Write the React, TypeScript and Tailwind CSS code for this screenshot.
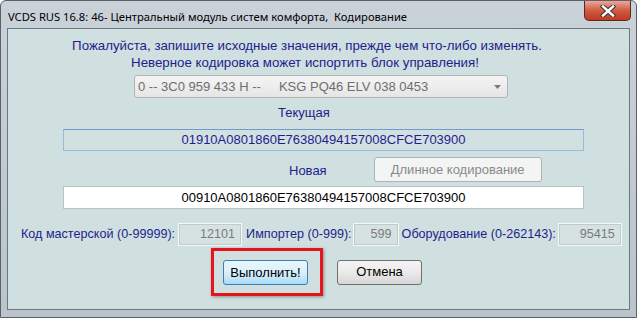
import React from 'react';

const navy = 'text-[#1e1e8c]';

const NumField = ({ value, w }: { value: string; w: string }) => (
  <div
    className={`${w} h-[23px] flex items-center justify-end pr-[6px] border border-[#f6f8f8] outline outline-1 outline-[#bfcccc] -outline-offset-2 bg-[#d6e2e2] text-[#7a7a7a]`}
  >
    {value}
  </div>
);

export default function App() {
  return (
    <div className="w-[637px] h-[318px] flex flex-col bg-gradient-to-b from-[#c9d2d8] to-[#b9c4cb] border border-[#5a6066] rounded-t-[6px] overflow-hidden font-['Liberation_Sans',Arial,sans-serif] text-[13px] whitespace-nowrap">
      {/* title bar */}
      <div className="h-[27px] flex items-start shrink-0">
        <div className="pt-[8px] pl-[7px] text-[11.2px] text-black font-['Noto_Sans','DejaVu_Sans',sans-serif] leading-[16px]">
          VCDS RUS 16.8: 46- Центральный модуль систем комфорта,&nbsp; Кодирование
        </div>
        <div className="ml-auto mr-[5px] w-[47px] h-[20px] rounded-b-[5px] border border-t-0 border-[#5b2a22] bg-gradient-to-b from-[#e9a898] via-[#cf5a43] to-[#c0391f] flex items-center justify-center">
          <svg width="16" height="12" viewBox="0 0 16 12">
            <path d="M3 1.5 L13 10.5 M13 1.5 L3 10.5" stroke="#3a3a3a" strokeWidth="4.5" strokeLinecap="square" />
            <path d="M3 1.5 L13 10.5 M13 1.5 L3 10.5" stroke="#ffffff" strokeWidth="2.4" strokeLinecap="square" />
          </svg>
        </div>
      </div>

      {/* client area */}
      <div className="flex-1 mx-[6px] mb-[7px] border border-[#6f777c] bg-[#d0dfdf] flex flex-col">
        <div className={`mt-[9px] text-center ${navy} leading-[16px] pr-[23px] text-[13.3px]`}>
          Пожалуйста, запишите исходные значения, прежде чем что-либо изменять.
        </div>
        <div className={`mt-[1px] text-center ${navy} leading-[16px] pr-[27px] text-[13.3px]`}>
          Неверное кодировка может испортить блок управления!
        </div>

        <div className="mt-[4px] ml-[126px] w-[374px] h-[23px] border border-[#b3b3b3] rounded-[3px] bg-gradient-to-b from-[#f4f4f4] to-[#e6e6e6] flex items-center pl-[3px] pr-[6px] text-[#6e6e6e]">
          <span className="whitespace-pre">0 -- 3C0 959 433 H --     KSG PQ46 ELV 038 0453</span>
          <svg className="ml-auto" width="7" height="4" viewBox="0 0 7 4">
            <path d="M0 0 L7 0 L3.5 4 Z" fill="#7a7a7a" />
          </svg>
        </div>

        <div className={`mt-[7px] ml-[270px] ${navy} leading-[16px]`}>Текущая</div>

        <div className={`mt-[8px] ml-[55px] w-[521px] h-[22px] border border-[#98bbdc] border-t-[#6f9ccb] bg-[#d3e0e2] flex items-center justify-center ${navy}`}>
          01910A0801860E76380494157008CFCE703900
        </div>

        <div className="mt-[6px] flex items-end">
          <div className={`ml-[281px] ${navy} leading-[16px] mb-[3px]`}>Новая</div>
          <div className="ml-[47px] w-[168px] h-[25px] border border-[#adb2b5] rounded-[3px] bg-[#f3f4f4] flex items-center justify-center text-[#8a8a8a]">
            Длинное кодирование
          </div>
        </div>

        <div className="mt-[4px] ml-[55px] w-[521px] h-[23px] border border-[#b9c2c6] bg-white flex items-center justify-center text-black">
          00910A0801860E76380494157008CFCE703900
        </div>

        <div className={`mt-[14px] ml-[13px] flex items-center ${navy} text-[12.6px]`}>
          <span>Код мастерской (0-99999):</span>
          <div className="ml-[3px]">
            <NumField value="12101" w="w-[64px]" />
          </div>
          <span className="ml-[4px]">Импортер (0-999):</span>
          <div className="ml-[1px]">
            <NumField value="599" w="w-[46px]" />
          </div>
          <span className="ml-[3px]">Оборудование (0-262143):</span>
          <div className="ml-[2px]">
            <NumField value="95415" w="w-[64px]" />
          </div>
        </div>

        <div className="mt-[2px] ml-[203px] flex items-center">
          <div className="border-[3px] border-[#e8141b] pt-[9px] pb-[8px] pl-[9px] pr-[12px] shadow-[1px_1px_3px_rgba(0,0,0,0.35)]">
            <div className="w-[85px] h-[25px] border border-[#3c7fb1] rounded-[3px] bg-gradient-to-b from-[#eaf6fd] via-[#d9f0fc] to-[#a9daf5] flex items-center justify-center text-black">
              Выполнить!
            </div>
          </div>
          <div className="ml-[14px] w-[85px] h-[25px] border border-[#707070] rounded-[3px] bg-gradient-to-b from-[#f4f4f4] via-[#eaeaea] to-[#d6d6d6] flex items-center justify-center text-black">
            Отмена
          </div>
        </div>
      </div>
    </div>
  );
}
